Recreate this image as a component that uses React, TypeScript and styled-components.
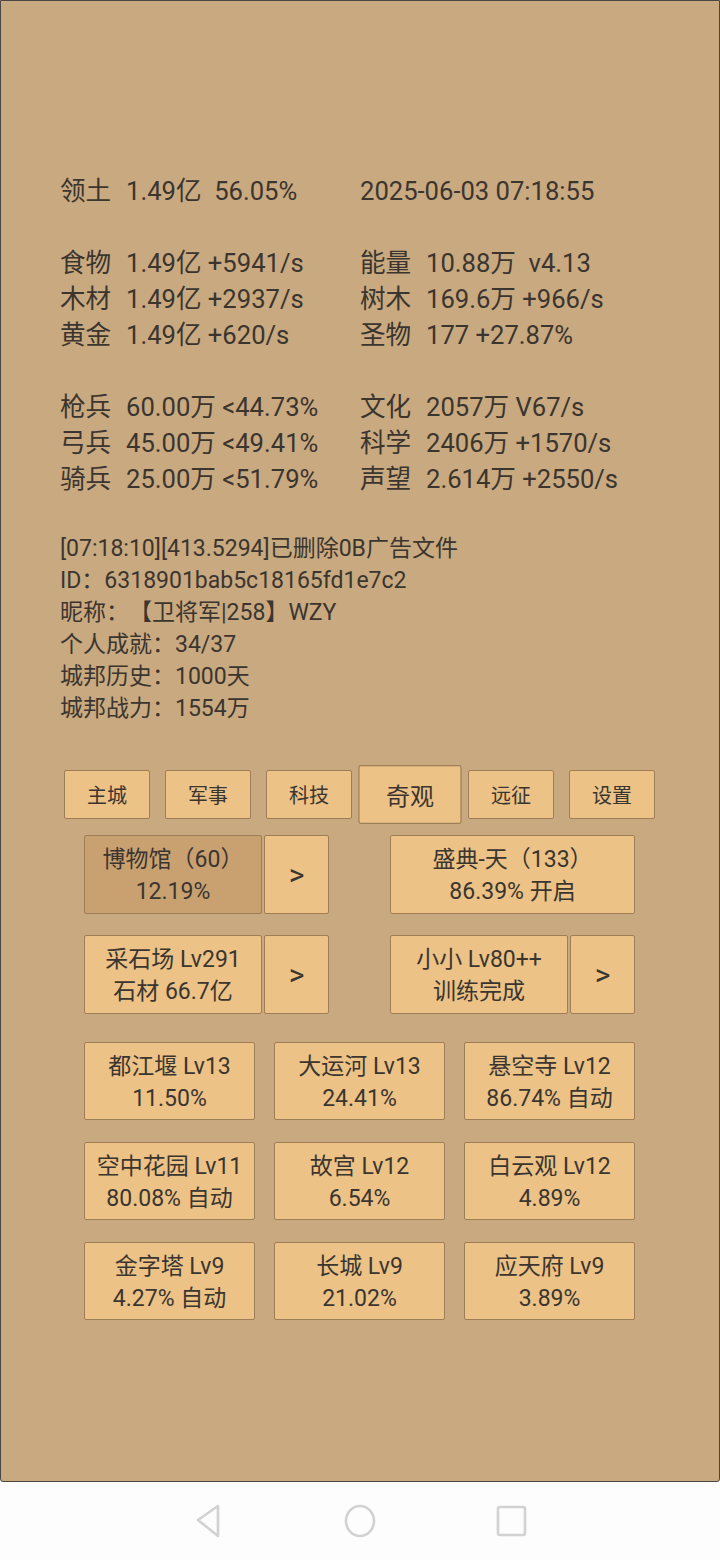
import React from "react";
import styled, { createGlobalStyle } from "styled-components";

const Global = createGlobalStyle`
  html, body { margin: 0; padding: 0; background: #fdfdfd; }
  * { box-sizing: border-box; }
  body { font-family: Roboto, "Noto Sans CJK SC", sans-serif; color: #3b3530; text-spacing-trim: space-all; }
`;

const Screen = styled.div`
  width: 720px;
  height: 1560px;
  display: flex;
  flex-direction: column;
`;

const Panel = styled.main`
  height: 1482px;
  background: #c9a97f;
  border: 1px solid #4a4642;
  border-radius: 0 0 3px 3px;
  padding-top: 172px;
  display: flex;
  flex-direction: column;
`;

const StatBlock = styled.div`
  display: grid;
  grid-template-columns: 300px 1fr;
  padding-left: 59px;
  font-size: 25.6px;
  line-height: 36px;
  margin-bottom: 36px;
  white-space: pre;
`;

const Stat = styled.div`
  display: flex;
`;

const Label = styled.span`
  width: 66px;
  flex: none;
`;

const Info = styled.div`
  padding-left: 59px;
  font-size: 23px;
  line-height: 32px;
  white-space: pre;
  text-spacing-trim: space-all;
`;

const Tabs = styled.nav`
  display: flex;
  align-items: center;
  gap: 15px;
  padding-left: 63px;
  margin-top: 45px;
  height: 49px;
`;

const Tab = styled.button<{ $active?: boolean }>`
  width: 86px;
  height: 49px;
  padding: 0;
  background: #ecc286;
  border: 1px solid #9e7e58;
  border-radius: 2px;
  font-family: Roboto, "Noto Sans CJK SC", sans-serif;
  font-size: 20px;
  color: #3b3530;
  transform: ${(p) => (p.$active ? "scale(1.2)" : "none")};
`;

const Content = styled.section`
  padding-left: 83px;
  width: 634px;
  display: flex;
  flex-direction: column;
`;

const PairRow = styled.div`
  display: flex;
  justify-content: space-between;
  height: 79px;
  margin-top: 16px;
  & + & {
    margin-top: 21px;
  }
`;

const Half = styled.div`
  display: flex;
  gap: 2px;
  width: 245px;
`;

const Btn = styled.button<{ $pressed?: boolean; $grow?: boolean }>`
  flex: ${(p) => (p.$grow ? "1" : "none")};
  height: 100%;
  padding: 3px 0 0;
  background: ${(p) => (p.$pressed ? "#c9a070" : "#ecc286")};
  border: 1px solid #9e7e58;
  border-radius: 2px;
  font-family: Roboto, "Noto Sans CJK SC", sans-serif;
  font-size: 23px;
  line-height: 32px;
  color: #3b3530;
  white-space: pre;
  text-spacing-trim: space-all;
`;

const ArrowBtn = styled(Btn)`
  width: 65px;
  padding: 0;
  font-size: 30px;
`;

const Grid = styled.div`
  margin-top: 28px;
  display: grid;
  grid-template-columns: repeat(3, 171px);
  grid-auto-rows: 78px;
  column-gap: 19px;
  row-gap: 22px;
`;

const NavBar = styled.footer`
  flex: 1;
  background: #fdfdfd;
  display: flex;
  align-items: center;
  justify-content: center;
`;

const NavSlot = styled.div`
  width: 152px;
  display: flex;
  justify-content: center;
`;

const stats1 = [
  ["领土", "1.49亿  56.05%"],
  ["", "2025-06-03 07:18:55"],
];
const stats2 = [
  ["食物", "1.49亿 +5941/s"],
  ["能量", "10.88万  v4.13"],
  ["木材", "1.49亿 +2937/s"],
  ["树木", "169.6万 +966/s"],
  ["黄金", "1.49亿 +620/s"],
  ["圣物", "177 +27.87%"],
];
const stats3 = [
  ["枪兵", "60.00万 <44.73%"],
  ["文化", "2057万 V67/s"],
  ["弓兵", "45.00万 <49.41%"],
  ["科学", "2406万 +1570/s"],
  ["骑兵", "25.00万 <51.79%"],
  ["声望", "2.614万 +2550/s"],
];

const info = [
  "[07:18:10][413.5294]已删除0B广告文件",
  "ID：6318901bab5c18165fd1e7c2",
  "昵称：【卫将军|258】WZY",
  "个人成就：34/37",
  "城邦历史：1000天",
  "城邦战力：1554万",
];

const tabs = ["主城", "军事", "科技", "奇观", "远征", "设置"];

const wonders = [
  "都江堰 Lv13\n11.50%",
  "大运河 Lv13\n24.41%",
  "悬空寺 Lv12\n86.74% 自动",
  "空中花园 Lv11\n80.08% 自动",
  "故宫 Lv12\n6.54%",
  "白云观 Lv12\n4.89%",
  "金字塔 Lv9\n4.27% 自动",
  "长城 Lv9\n21.02%",
  "应天府 Lv9\n3.89%",
];

function renderStats(rows: string[][]) {
  return rows.map(([l, v], i) => (
    <Stat key={i}>
      {l ? <Label>{l}</Label> : null}
      <span>{v}</span>
    </Stat>
  ));
}

export default function App() {
  return (
    <Screen>
      <Global />
      <Panel>
        <StatBlock>{renderStats(stats1)}</StatBlock>
        <StatBlock>{renderStats(stats2)}</StatBlock>
        <StatBlock>{renderStats(stats3)}</StatBlock>
        <Info>
          {info.map((t, i) => (
            <div key={i}>{t}</div>
          ))}
        </Info>
        <Tabs>
          {tabs.map((t) => (
            <Tab key={t} $active={t === "奇观"}>
              {t}
            </Tab>
          ))}
        </Tabs>
        <Content>
          <PairRow>
            <Half>
              <Btn $pressed $grow>{"博物馆（60）\n12.19%"}</Btn>
              <ArrowBtn>&gt;</ArrowBtn>
            </Half>
            <Half>
              <Btn $grow>{"盛典-天（133）\n86.39% 开启"}</Btn>
            </Half>
          </PairRow>
          <PairRow>
            <Half>
              <Btn $grow>{"采石场 Lv291\n石材 66.7亿"}</Btn>
              <ArrowBtn>&gt;</ArrowBtn>
            </Half>
            <Half>
              <Btn $grow>{"小小 Lv80++\n训练完成"}</Btn>
              <ArrowBtn>&gt;</ArrowBtn>
            </Half>
          </PairRow>
          <Grid>
            {wonders.map((w) => (
              <Btn key={w}>{w}</Btn>
            ))}
          </Grid>
        </Content>
      </Panel>
      <NavBar>
        <NavSlot>
          <svg width="34" height="36" viewBox="0 0 34 36">
            <path d="M27 3 L27 33 L7 17 Z" fill="none" stroke="#d2d2d2" strokeWidth="2.6" strokeLinejoin="round" />
          </svg>
        </NavSlot>
        <NavSlot>
          <svg width="34" height="36" viewBox="0 0 34 36">
            <ellipse cx="17" cy="18" rx="14" ry="15" fill="none" stroke="#d2d2d2" strokeWidth="2.6" />
          </svg>
        </NavSlot>
        <NavSlot>
          <svg width="32" height="32" viewBox="0 0 32 32">
            <rect x="2" y="2" width="27" height="28" rx="2" fill="none" stroke="#d2d2d2" strokeWidth="2.6" />
          </svg>
        </NavSlot>
      </NavBar>
    </Screen>
  );
}
